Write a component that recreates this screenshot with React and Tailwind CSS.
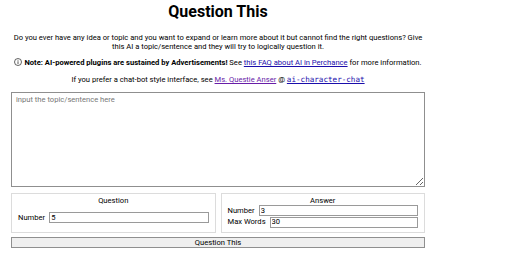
export default function App() {
  return (
    <div className="w-[512px] h-[254px] bg-white overflow-hidden font-['Roboto','Liberation_Sans',sans-serif] text-black">
      <div className="ml-[11px] w-[414px] flex flex-col">
        <h1 className="mt-[2px] h-[20px] text-center text-[16px] leading-[20px] font-bold">Question This</h1>

        <p className="mt-[11px] text-center text-[7.6px] leading-[9px]">
          Do you ever have any idea or topic and you want to expand or learn more about it but cannot find the right questions? Give this AI a topic/sentence and they will try to logically question it.
        </p>

        <p className="mt-[7px] text-center text-[7.6px] leading-[10px] whitespace-nowrap">
          <svg viewBox="0 0 16 16" className="inline-block w-[8px] h-[8px] align-[-1px] mr-[2px]">
            <circle cx="8" cy="8" r="7" fill="none" stroke="#111" strokeWidth="1.3" />
            <rect x="7.3" y="6.5" width="1.4" height="5.5" fill="#111" />
            <rect x="7.3" y="3.8" width="1.4" height="1.5" fill="#111" />
          </svg>
          <b>Note: AI-powered plugins are sustained by Advertisements!</b> See{' '}
          <a href="#" className="text-[#1a0dab] underline">this FAQ about AI in Perchance</a> for more information.
        </p>

        <p className="mt-[7px] text-center text-[7.6px] leading-[10px]">
          If you prefer a chat-bot style interface, see{' '}
          <a href="#" className="text-[#681da8] underline">Ms. Questie Anser</a> @{' '}
          <a href="#" className="text-[#1a0dab] underline font-['DejaVu_Sans_Mono',monospace] text-[7.6px]">ai-character-chat</a>
        </p>

        <textarea
          placeholder="input the topic/sentence here"
          className="mt-[7px] h-[95px] w-full resize-y border border-[#8f8f8f] px-[4px] py-[2px] text-[7.6px] leading-[9px] placeholder-[#777] outline-none"
        />

        <div className="mt-[6px] grid grid-cols-2 gap-[5px]">
          <div className="h-[40px] border border-[#dcdcdc] px-[6px] pt-[2px]">
            <div className="text-center text-[7.6px] leading-[9px]">Question</div>
            <div className="mt-[7px] flex items-center gap-[4px] text-[7.6px]">
              <span>Number</span>
              <input defaultValue="5" className="h-[11px] flex-1 border border-[#9a9a9a] px-[1px] text-[7.6px] outline-none" />
            </div>
          </div>
          <div className="h-[40px] border border-[#dcdcdc] px-[6px] pt-[2px]">
            <div className="text-center text-[7.6px] leading-[9px]">Answer</div>
            <div className="flex items-center gap-[4px] text-[7.6px]">
              <span>Number</span>
              <input defaultValue="3" className="h-[11px] flex-1 border border-[#9a9a9a] px-[1px] text-[7.6px] outline-none" />
            </div>
            <div className="flex items-center gap-[4px] text-[7.6px]">
              <span>Max Words</span>
              <input defaultValue="30" className="h-[11px] flex-1 border border-[#9a9a9a] px-[1px] text-[7.6px] outline-none" />
            </div>
          </div>
        </div>

        <button className="mt-[4px] h-[11px] w-full border border-[#8f8f8f] bg-[#efefef] text-[7.6px] leading-[9px]">
          Question This
        </button>
      </div>
    </div>
  );
}
